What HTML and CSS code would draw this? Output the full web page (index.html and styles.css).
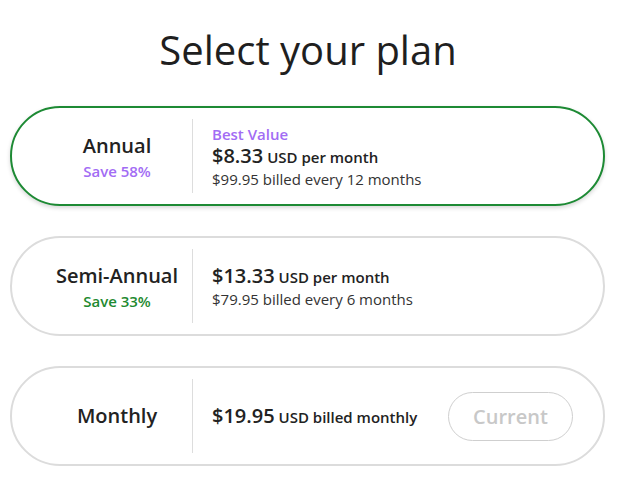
FILE: index.html
```html
<!DOCTYPE html>
<html lang="en">
<head>
<meta charset="utf-8">
<title>Select your plan</title>
<link rel="stylesheet" href="styles.css">
</head>
<body>
<main class="page">
  <h1 class="title">Select your plan</h1>
  <div class="plans">
    <div class="card card-selected">
      <div class="plan-name">
        <div class="name">Annual</div>
        <div class="save save-purple">Save 58%</div>
      </div>
      <div class="divider"></div>
      <div class="plan-info">
        <div class="badge">Best Value</div>
        <div class="price-line"><span class="price">$8.33</span> <span class="unit">USD per month</span></div>
        <div class="billed">$99.95 billed every 12 months</div>
      </div>
    </div>
    <div class="card">
      <div class="plan-name">
        <div class="name">Semi-Annual</div>
        <div class="save save-green">Save 33%</div>
      </div>
      <div class="divider"></div>
      <div class="plan-info">
        <div class="price-line"><span class="price">$13.33</span> <span class="unit">USD per month</span></div>
        <div class="billed">$79.95 billed every 6 months</div>
      </div>
    </div>
    <div class="card">
      <div class="plan-name">
        <div class="name">Monthly</div>
      </div>
      <div class="divider"></div>
      <div class="plan-info">
        <div class="price-line"><span class="price">$19.95</span> <span class="unit">USD billed monthly</span></div>
      </div>
      <button class="current" type="button">Current</button>
    </div>
  </div>
</main>
</body>
</html>
```

FILE: styles.css
```css
* { box-sizing: border-box; }

html, body {
  margin: 0;
  padding: 0;
  background: #ffffff;
}

body {
  font-family: "Open Sans", "Noto Sans", "Liberation Sans", sans-serif;
  color: #222222;
}

.page {
  padding: 23px 15px 0 10px;
}

.title {
  margin: 0 0 29px 0;
  font-size: 40px;
  line-height: 54px;
  font-weight: 400;
  text-align: center;
  color: #1f1f1f;
  padding-left: 1px;
}

.plans {
  display: flex;
  flex-direction: column;
  gap: 30px;
}

.card {
  display: flex;
  align-items: center;
  height: 100px;
  border: 2px solid #dcdcdc;
  border-radius: 50px;
  padding: 0 30px;
  background: #ffffff;
}

.card-selected {
  border-color: #1d8a34;
  box-shadow: 0 2px 4px rgba(0, 0, 0, 0.16);
}

.plan-name {
  width: 150px;
  text-align: center;
}

.name {
  font-size: 20px;
  line-height: 30px;
  font-weight: 600;
  color: #222222;
}

.save {
  font-size: 15px;
  line-height: 21px;
  font-weight: 600;
}

.save-purple { color: #a26cf4; }
.save-green { color: #1e8a30; }

.divider {
  align-self: stretch;
  width: 1px;
  margin: 11px 0;
  background: #dddddd;
}

.plan-info {
  padding-left: 19px;
}

.badge {
  font-size: 15px;
  line-height: 20px;
  font-weight: 600;
  color: #a26cf4;
}

.price-line {
  font-size: 15px;
  line-height: 24px;
  font-weight: 600;
  color: #222222;
}

.price {
  font-size: 20px;
  font-weight: 600;
}

.unit {
  font-size: 15px;
}

.billed {
  font-size: 15px;
  line-height: 20px;
  font-weight: 400;
  color: #333333;
}

.current {
  margin-left: auto;
  width: 125px;
  height: 49px;
  border: 1px solid #cfcfcf;
  border-radius: 25px;
  background: #ffffff;
  font-family: inherit;
  font-size: 20px;
  font-weight: 600;
  color: #c8c8c8;
  padding: 0;
}
```
